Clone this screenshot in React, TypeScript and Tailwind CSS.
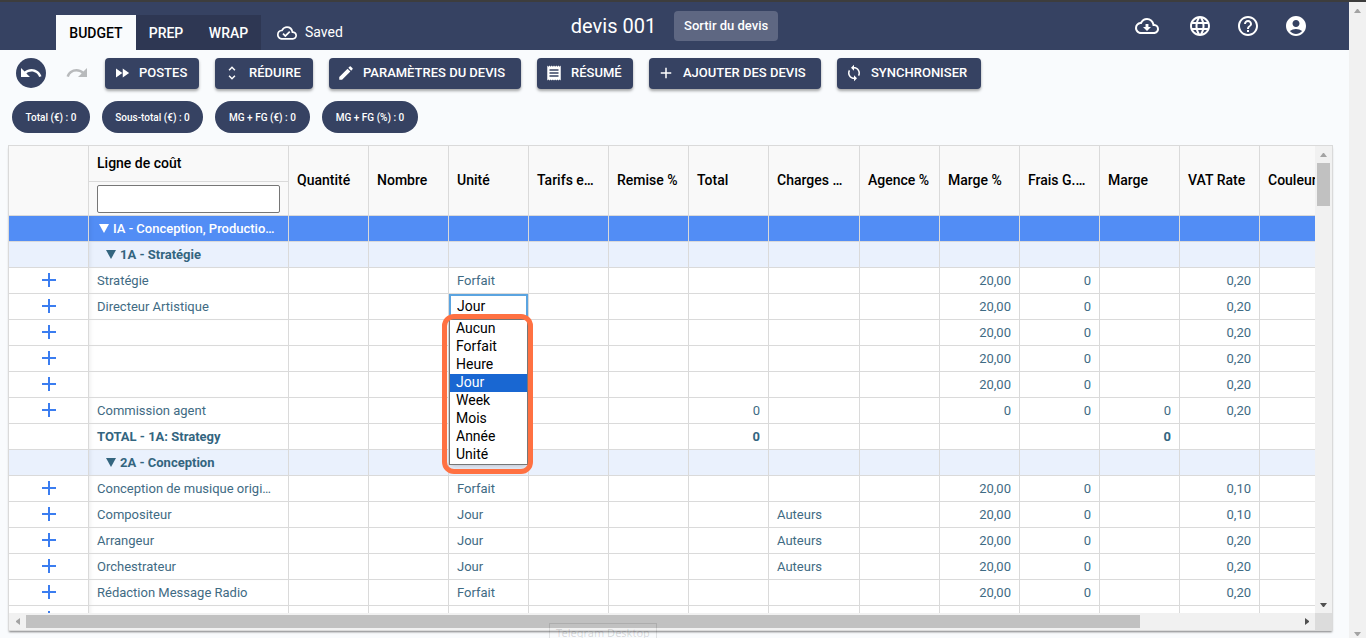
import type { ReactNode } from "react";
import {
  MdAccountCircle,
  MdAdd,
  MdEdit,
  MdFastForward,
  MdHelpOutline,
  MdLanguage,
  MdOutlineCloudDone,
  MdOutlineCloudDownload,
  MdReceipt,
  MdRedo,
  MdSync,
  MdUndo,
  MdUnfoldMore,
} from "react-icons/md";

type Row = {
  kind: "section" | "group" | "line" | "total";
  name: string;
  unit?: string;
  editing?: boolean;
  total?: string;
  charges?: string;
  margePct?: string;
  frais?: string;
  marge?: string;
  vat?: string;
};

const line = (name: string, unit = "", vat = "0,20", charges = ""): Row => ({
  kind: "line",
  name,
  unit,
  charges,
  margePct: "20,00",
  frais: "0",
  vat,
});

const rows: Row[] = [
  { kind: "section", name: "IA - Conception, Productio…" },
  { kind: "group", name: "1A - Stratégie" },
  line("Stratégie", "Forfait"),
  { ...line("Directeur Artistique", "Jour"), editing: true },
  line(""),
  line(""),
  line(""),
  { kind: "line", name: "Commission agent", total: "0", margePct: "0", frais: "0", marge: "0", vat: "0,20" },
  { kind: "total", name: "TOTAL - 1A: Strategy", total: "0", marge: "0" },
  { kind: "group", name: "2A - Conception" },
  line("Conception de musique origi…", "Forfait", "0,10"),
  line("Compositeur", "Jour", "0,10", "Auteurs"),
  line("Arrangeur", "Jour", "0,20", "Auteurs"),
  line("Orchestrateur", "Jour", "0,20", "Auteurs"),
  line("Rédaction Message Radio", "Forfait"),
  { kind: "line", name: "" },
];

const units = ["Aucun", "Forfait", "Heure", "Jour", "Week", "Mois", "Année", "Unité"];

const columns = [
  "Quantité",
  "Nombre",
  "Unité",
  "Tarifs e…",
  "Remise %",
  "Total",
  "Charges …",
  "Agence %",
  "Marge %",
  "Frais G.…",
  "Marge",
  "VAT Rate",
  "Couleur",
];

const rowStyle = {
  section: "bg-[#528df5] text-white font-medium",
  group: "bg-[#eaf1fd] text-[#33657f] font-bold",
  line: "bg-white text-[#3f6b84]",
  total: "bg-white text-[#33657f] font-bold",
};

const cell = "h-[26px] border-r border-b border-[#dadada] px-2 leading-5";
const headCell = "border-r border-b border-[#dadada] px-2 pt-0 pb-0.5 font-medium";

function Tool({ icon, width, children }: { icon: ReactNode; width: string; children: ReactNode }) {
  return (
    <button
      className={`${width} flex h-[31px] items-center gap-2 rounded bg-[#364262] pl-2 text-[13px] font-medium whitespace-nowrap text-white shadow-[0_2px_3px_rgba(0,0,0,0.35)]`}
    >
      <span className="flex w-[18px] justify-center pb-0.5 text-[18px]">{icon}</span>
      <span className="pb-0.5 leading-4">{children}</span>
    </button>
  );
}

function Arrow({ dir, dark }: { dir: "up" | "down" | "left" | "right"; dark?: boolean }) {
  const d = {
    up: "M0 4h7L4 0H3z",
    down: "M0 0h7L4 4H3z",
    left: "M4 0v7L0 4V3z",
    right: "M0 0v7l4-3V3z",
  }[dir];
  const wide = dir === "up" || dir === "down";
  return (
    <svg width={wide ? 7 : 4} height={wide ? 4 : 7} className={dark ? "fill-[#505050]" : "fill-[#a3a3a3]"} aria-hidden="true">
      <path d={d} />
    </svg>
  );
}

function UnitEditor() {
  return (
    <div className="relative h-[25px]">
      <select
        aria-label="Unité"
        defaultValue="Jour"
        className="block h-[25px] w-full appearance-none border-2 border-[#5ba4e0] bg-white px-1.5 pb-0.5 text-sm text-black outline-none"
      >
        {units.map((u) => (
          <option key={u}>{u}</option>
        ))}
      </select>
      <ul
        role="listbox"
        aria-label="Choix de l'unité"
        className="absolute top-[25px] left-0 z-20 w-[79px] border border-[#767676] bg-white text-sm text-black shadow-md"
      >
        {units.map((u) => (
          <li
            key={u}
            role="option"
            aria-selected={u === "Jour"}
            className={u === "Jour" ? "h-[18px] bg-[#1967d2] px-1.5 leading-4 text-white" : "h-[18px] px-1.5 leading-4"}
          >
            {u}
          </li>
        ))}
      </ul>
      <div className="pointer-events-none absolute top-5 -left-[7px] z-30 h-40 w-[91px] rounded-xl border-[5px] border-[#ff7142]" />
    </div>
  );
}

function BudgetRow({ row }: { row: Row }) {
  const marker = row.kind === "section" || row.kind === "group";
  const indent = row.kind === "group" ? "pl-[9px]" : row.kind === "section" ? "pl-0.5" : "";
  return (
    <tr className={rowStyle[row.kind]}>
      <td className={cell}>
        {row.kind === "line" && (
          <button aria-label="Ajouter une ligne" className="mx-auto block pb-0.5">
            <svg width="14" height="14" viewBox="0 0 14 14" className="fill-[#3b7df0]">
              <path d="M6 0h2v6h6v2H8v6H6V8H0V6h6z" />
            </svg>
          </button>
        )}
      </td>
      <td className={`${cell} shadow-[inset_4px_0_4px_-3px_rgba(0,0,0,0.08)]`}>
        <div className={`${indent} whitespace-nowrap`}>
          {marker && (
            <span className="mr-1 inline-block">
              <svg width="10" height="10" viewBox="0 0 10 10" fill="currentColor" aria-hidden="true">
                <path d="M0 1h10L5 10z" />
              </svg>
            </span>
          )}
          {row.name}
        </div>
      </td>
      <td className={cell} />
      <td className={cell} />
      <td className={row.editing ? "h-[26px] border-r border-b border-[#dadada] p-0" : cell}>
        {row.editing ? <UnitEditor /> : row.unit}
      </td>
      <td className={cell} />
      <td className={cell} />
      <td className={`${cell} text-right`}>{row.total}</td>
      <td className={cell}>{row.charges}</td>
      <td className={cell} />
      <td className={`${cell} text-right`}>{row.margePct}</td>
      <td className={`${cell} text-right`}>{row.frais}</td>
      <td className={`${cell} text-right`}>{row.marge}</td>
      <td className={`${cell} text-right`}>{row.vat}</td>
      <td className={cell} />
    </tr>
  );
}

export default function App() {
  return (
    <div className="flex h-screen flex-col overflow-hidden border-t-2 border-[#3d3d3d] bg-[#f9fbfd] font-[Roboto,sans-serif]">
      <div className="flex min-h-0 flex-1">
        <div className="flex min-w-0 flex-1 flex-col">
          <header className="grid h-12 shrink-0 grid-cols-[1fr_auto_1fr] items-center bg-[#364262] text-white">
            <nav className="flex h-full items-end pl-14 text-sm font-medium">
              <a href="#budget" className="flex h-[35px] w-20 items-center justify-center bg-[#f9fbfd] text-black">BUDGET</a>
              <a href="#prep" className="flex h-[35px] w-[60px] items-center justify-center bg-[#2e3753]">PREP</a>
              <a href="#wrap" className="flex h-[35px] w-[65px] items-center justify-center bg-[#2e3753]">WRAP</a>
              <span className="ml-4 flex h-[35px] items-center gap-2 font-normal">
                <MdOutlineCloudDone size={20} />
                <span className="pb-0.5">Saved</span>
              </span>
            </nav>
            <div className="flex items-center gap-[18px]">
              <h1 className="text-xl">devis 001</h1>
              <button className="h-[30px] w-[104px] rounded bg-[#5e6782] text-[13px] font-medium">Sortir du devis</button>
            </div>
            <div className="flex items-center justify-end gap-6 pr-[41px]">
              <button aria-label="Télécharger" className="mr-[5px]"><MdOutlineCloudDownload size={24} /></button>
              <button aria-label="Langue"><MdLanguage size={24} /></button>
              <button aria-label="Aide"><MdHelpOutline size={24} /></button>
              <button aria-label="Compte"><MdAccountCircle size={24} /></button>
            </div>
          </header>

          <div className="flex shrink-0 items-start gap-4 px-4 pt-2">
            <button aria-label="Annuler" className="flex size-[30px] items-center justify-center rounded-full bg-[#364262] text-white">
              <MdUndo size={24} />
            </button>
            <button aria-label="Rétablir" className="flex h-[30px] w-[27px] items-center justify-end text-[#b8babc]">
              <MdRedo size={24} />
            </button>
            <Tool width="w-[94px]" icon={<MdFastForward />}>POSTES</Tool>
            <Tool width="w-[98px]" icon={<MdUnfoldMore />}>RÉDUIRE</Tool>
            <Tool width="w-48" icon={<MdEdit />}>PARAMÈTRES DU DEVIS</Tool>
            <Tool width="w-24" icon={<MdReceipt />}>RÉSUMÉ</Tool>
            <Tool width="w-[172px]" icon={<MdAdd />}>AJOUTER DES DEVIS</Tool>
            <Tool width="w-36" icon={<MdSync />}>SYNCHRONISER</Tool>
          </div>

          <div className="flex shrink-0 gap-3 p-3 text-[10px] font-medium text-white">
            <span className="flex h-8 w-[78px] items-center justify-center rounded-full bg-[#364262]">Total (€) : 0</span>
            <span className="flex h-8 w-[101px] items-center justify-center rounded-full bg-[#364262]">Sous-total (€) : 0</span>
            <span className="flex h-8 w-[95px] items-center justify-center rounded-full bg-[#364262]">MG + FG (€) : 0</span>
            <span className="flex h-8 w-24 items-center justify-center rounded-full bg-[#364262]">MG + FG (%) : 0</span>
          </div>

          <main className="mr-4 mb-[7px] ml-2 flex min-h-0 flex-1 border border-[#dadada] bg-white shadow-[0_2px_2px_-1px_rgba(0,0,0,0.5)]">
            <div className="flex min-w-0 flex-1 flex-col">
              <div className="min-h-0 flex-1 overflow-hidden">
                <table className="w-[1331px] table-fixed border-separate border-spacing-0 text-[13px]">
                  <colgroup>
                    <col className="w-20" />
                    <col className="w-[200px]" />
                    {columns.map((c) => (
                      <col key={c} className={c === "Charges …" ? "w-[91px]" : "w-20"} />
                    ))}
                  </colgroup>
                  <thead className="bg-[#f9f9f9] text-left text-sm text-black">
                    <tr>
                      <th rowSpan={2} className={headCell} />
                      <th className={`${headCell} h-9`}>
                        <label htmlFor="filter">Ligne de coût</label>
                      </th>
                      {columns.map((c) => (
                        <th key={c} rowSpan={2} className={`${headCell} whitespace-nowrap`}>
                          {c}
                        </th>
                      ))}
                    </tr>
                    <tr>
                      <th className="h-[34px] border-r border-b border-[#dadada] px-2 py-0">
                        <input id="filter" type="text" className="block h-7 w-full rounded-xs border border-[#767676] bg-white px-1 font-normal" />
                      </th>
                    </tr>
                  </thead>
                  <tbody>
                    {rows.map((r, i) => (
                      <BudgetRow key={i} row={r} />
                    ))}
                  </tbody>
                </table>
              </div>
              <div className="flex h-[17px] shrink-0 items-center bg-[#f1f1f1]">
                <span className="flex w-[17px] justify-center"><Arrow dir="left" /></span>
                <span className="flex h-[13px] flex-1">
                  <span className="w-[87.6%] bg-[#c1c1c1]" />
                </span>
                <span className="flex w-[17px] justify-center"><Arrow dir="right" dark /></span>
              </div>
            </div>
            <div className="flex w-[17px] shrink-0 flex-col items-center bg-[#f1f1f1]">
              <span className="flex h-[17px] items-center"><Arrow dir="up" /></span>
              <span className="w-[13px] flex-1">
                <span className="block h-[43px] bg-[#c1c1c1]" />
              </span>
              <span className="flex h-[17px] items-center"><Arrow dir="down" dark /></span>
              <span className="h-[17px] w-full bg-[#dcdcdc]" />
            </div>
          </main>
        </div>
        <div className="flex w-[17px] shrink-0 flex-col items-center justify-between bg-[#f1f1f1] pt-[7px] pb-0.5">
          <Arrow dir="up" />
          <Arrow dir="down" />
        </div>
      </div>
      <div className="pointer-events-none absolute bottom-0 left-[549px] z-40 h-[15px] w-[108px] overflow-hidden border border-b-0 border-black/10 text-center font-['Noto_Sans',sans-serif] text-[11px] leading-[18px] text-black/15">
        Telegram Desktop
      </div>
    </div>
  );
}
